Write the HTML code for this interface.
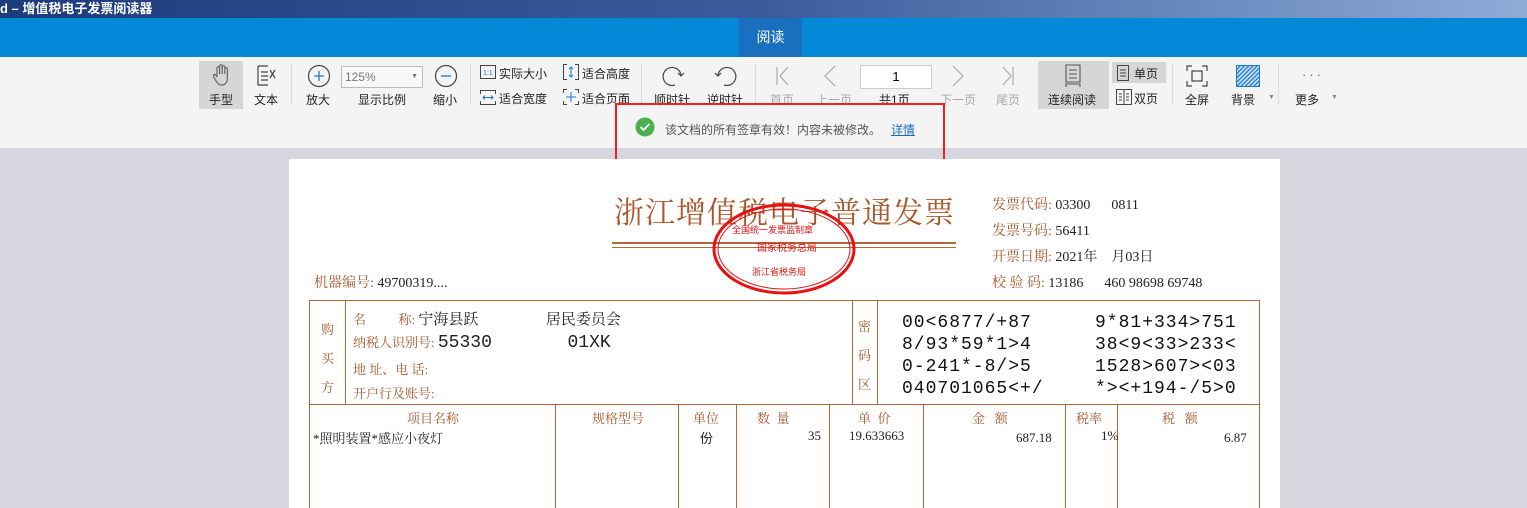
<!DOCTYPE html>
<html><head><meta charset="utf-8"><style>
*{margin:0;padding:0;box-sizing:border-box}
body{width:1527px;height:508px;overflow:hidden;font-family:"Liberation Sans","Noto Sans CJK SC",sans-serif;background:#d5d6de;position:relative}
.a{position:absolute;white-space:nowrap}
.tb{left:0;top:0;width:1527px;height:18px;background:linear-gradient(90deg,#1d3a7c,#3b5c9c 50%,#8eacd8);color:#fff;font-size:13px;font-weight:bold;line-height:18px}
.blue{left:0;top:18px;width:1527px;height:39px;background:#0489d9}
.tab{left:739px;top:18px;width:63px;height:39px;background:#1a6fbf;color:#fff;font-size:14px;line-height:39px;text-align:center}
.tool{left:0;top:57px;width:1527px;height:91px;background:#f4f4f4}
.lbl{font-size:12px;color:#222}
.dim{color:#aaa}
.ico{position:absolute}
.b{color:#a8582c;font-family:"Liberation Serif","Noto Serif CJK SC",serif}
.l{position:absolute;background:#b5653a}
.mono{font-family:"Liberation Mono","DejaVu Sans Mono",monospace;font-size:18px;letter-spacing:1px;color:#111;line-height:22px}
</style></head><body>
<div class="a tb">d – 增值税电子发票阅读器</div>
<div class="a blue"></div>
<div class="a tab">阅读</div>
<div class="a tool"></div>
<div class="a" style="left:199px;top:61px;width:44px;height:48px;background:#d6d6d6"></div>
<div class="a" style="left:1038px;top:61px;width:71px;height:48px;background:#d6d6d6"></div>
<div class="a" style="left:1112px;top:62px;width:54px;height:21px;background:#d6d6d6"></div>
<div class="a" style="left:291px;top:64px;width:1px;height:40px;background:#ddd"></div>
<div class="a" style="left:470px;top:64px;width:1px;height:40px;background:#ddd"></div>
<div class="a" style="left:641px;top:64px;width:1px;height:40px;background:#ddd"></div>
<div class="a" style="left:755px;top:64px;width:1px;height:40px;background:#ddd"></div>
<div class="a" style="left:1172px;top:64px;width:1px;height:40px;background:#ddd"></div>
<div class="a" style="left:1278px;top:64px;width:1px;height:40px;background:#ddd"></div>
<svg class="ico" style="left:210px;top:63px" width="24" height="24" viewBox="0 0 24 24" fill="none" stroke="#666" stroke-width="1.2"><path d="M7 13V5a1.3 1.3 0 0 1 2.6 0v6M9.6 11V3a1.3 1.3 0 0 1 2.6 0v8M12.2 11V4a1.3 1.3 0 0 1 2.6 0v7M14.8 11V6a1.3 1.3 0 0 1 2.6 0v9c0 4-2 7-6 7-3 0-4-2-6-5l-2-4a1.3 1.3 0 0 1 2.2-1.2L7 14"/></svg>
<svg class="ico" style="left:255px;top:64px" width="22" height="24" viewBox="0 0 22 24" fill="none" stroke="#444" stroke-width="1.2"><path d="M3 2h10M3 2v19h10M6 8h7M6 12h7M6 16h7M15 6l5 8M20 6l-5 8"/></svg>
<svg class="ico" style="left:307px;top:64px" width="24" height="24"><circle cx="12" cy="12" r="10.5" fill="none" stroke="#444" stroke-width="1.2"/><path d="M12 7v10M7 12h10" stroke="#1a7ad0" stroke-width="1.3"/></svg>
<div class="a" style="left:341px;top:66px;width:82px;height:22px;border:1px solid #bbb;background:#f8f8f8;font-size:12px;color:#777;line-height:20px;padding-left:3px">125%<span style="position:absolute;right:4px;font-size:7px">▼</span></div>
<svg class="ico" style="left:434px;top:64px" width="24" height="24"><circle cx="12" cy="12" r="10.5" fill="none" stroke="#444" stroke-width="1.2"/><path d="M7 12h10" stroke="#1a7ad0" stroke-width="1.3"/></svg>
<svg class="ico" style="left:480px;top:65px" width="16" height="14"><rect x=".5" y=".5" width="15" height="13" fill="none" stroke="#444"/><text x="3" y="10" font-size="7" fill="#1a7ad0">1:1</text></svg>
<svg class="ico" style="left:563px;top:64px" width="16" height="16"><path d="M4 .5H.5v15H4M12 .5h3.5v15H12" fill="none" stroke="#444"/><path d="M8 3v10M6 5l2-2 2 2M6 11l2 2 2-2" fill="none" stroke="#1a7ad0"/></svg>
<svg class="ico" style="left:480px;top:90px" width="16" height="15"><path d="M.5 4V.5h15V4M.5 11v3.5h15V11" fill="none" stroke="#444"/><path d="M3 7.5h10M5 5.5l-2 2 2 2M11 5.5l2 2-2 2" fill="none" stroke="#1a7ad0"/></svg>
<svg class="ico" style="left:563px;top:89px" width="16" height="16"><path d="M.5 4V.5H4M12 .5h3.5V4M.5 12v3.5H4M12 15.5h3.5V12" fill="none" stroke="#444"/><path d="M8 3v10M3 8h10" fill="none" stroke="#1a7ad0"/></svg>
<svg class="ico" style="left:660px;top:64px" width="26" height="24" fill="none" stroke="#444" stroke-width="1.2"><path d="M21 11A9 9 0 1 0 15 21"/><path d="M18 9l3 3 3-3"/></svg>
<svg class="ico" style="left:713px;top:64px" width="26" height="24" fill="none" stroke="#444" stroke-width="1.2"><path d="M5 11a9 9 0 1 1 6 10"/><path d="M2 9l3 3 3-3"/></svg>
<svg class="ico" style="left:775px;top:66px" width="16" height="20" fill="none" stroke="#aaa" stroke-width="1.2"><path d="M2 1v18M13 1L5 10l8 9"/></svg>
<svg class="ico" style="left:822px;top:65px" width="16" height="22" fill="none" stroke="#aaa" stroke-width="1.2"><path d="M13 1L3 11l10 10"/></svg>
<div class="a" style="left:860px;top:65px;width:72px;height:24px;border:1px solid #ccc;background:#fff;font-size:13px;text-align:center;line-height:22px">1</div>
<svg class="ico" style="left:950px;top:65px" width="16" height="22" fill="none" stroke="#aaa" stroke-width="1.2"><path d="M3 1l10 10L3 21"/></svg>
<svg class="ico" style="left:1000px;top:66px" width="16" height="20" fill="none" stroke="#aaa" stroke-width="1.2"><path d="M13 1v18M3 1l8 9-8 9"/></svg>
<svg class="ico" style="left:1064px;top:64px" width="18" height="24" fill="none" stroke="#555" stroke-width="1.1"><path d="M2 1h14v17H2zM5 6h8M5 10h8M5 14h8M2 23v-3h14v3"/></svg>
<svg class="ico" style="left:1116px;top:65px" width="14" height="16" fill="none" stroke="#444"><path d="M1.5.5h11v15h-11zM4 5h6M4 8h6M4 11h6"/></svg>
<svg class="ico" style="left:1116px;top:89px" width="16" height="16" fill="none" stroke="#444"><path d="M.5.5h15v15H.5zM8 .5v15M3 5h3M3 8h3M3 11h3M10 5h3M10 8h3M10 11h3"/></svg>
<svg class="ico" style="left:1186px;top:65px" width="22" height="22" fill="none" stroke="#444" stroke-width="1.2"><path d="M1 6V1h5M16 1h5v5M1 16v5h5M16 21h5v-5"/><rect x="6" y="6" width="10" height="10"/></svg>
<svg class="ico" style="left:1236px;top:65px" width="24" height="22"><defs><pattern id="h" width="3" height="3" patternUnits="userSpaceOnUse" patternTransform="rotate(45)"><rect width="1.3" height="3" fill="#1a7ad0"/></pattern></defs><rect x=".5" y=".5" width="23" height="21" fill="#cfe3f6" stroke="#1a7ad0"/><rect x=".5" y=".5" width="23" height="21" fill="url(#h)"/></svg>
<div class="a" style="left:1302px;top:67px;font-size:13px;color:#666;letter-spacing:3px">···</div>
<div class="a lbl" style="left:209px;top:91px">手型</div>
<div class="a lbl" style="left:254px;top:91px">文本</div>
<div class="a lbl" style="left:306px;top:91px">放大</div>
<div class="a lbl" style="left:358px;top:91px">显示比例</div>
<div class="a lbl" style="left:433px;top:91px">缩小</div>
<div class="a lbl" style="left:499px;top:65px">实际大小</div>
<div class="a lbl" style="left:582px;top:65px">适合高度</div>
<div class="a lbl" style="left:499px;top:90px">适合宽度</div>
<div class="a lbl" style="left:582px;top:90px">适合页面</div>
<div class="a lbl" style="left:654px;top:91px">顺时针</div>
<div class="a lbl" style="left:707px;top:91px">逆时针</div>
<div class="a lbl dim" style="left:770px;top:91px">首页</div>
<div class="a lbl dim" style="left:816px;top:91px">上一页</div>
<div class="a lbl" style="left:879px;top:91px">共1页</div>
<div class="a lbl dim" style="left:940px;top:91px">下一页</div>
<div class="a lbl dim" style="left:996px;top:91px">尾页</div>
<div class="a lbl" style="left:1048px;top:91px">连续阅读</div>
<div class="a lbl" style="left:1134px;top:65px">单页</div>
<div class="a lbl" style="left:1134px;top:90px">双页</div>
<div class="a lbl" style="left:1185px;top:91px">全屏</div>
<div class="a lbl" style="left:1231px;top:91px">背景</div>
<div class="a" style="left:1268px;top:94px;font-size:7px;color:#888">▼</div>
<div class="a lbl" style="left:1295px;top:91px">更多</div>
<div class="a" style="left:1331px;top:94px;font-size:7px;color:#888">▼</div>
<svg class="ico" style="left:635px;top:117px" width="20" height="20"><circle cx="10" cy="10" r="9.5" fill="#4caf50"/><path d="M5.5 10l3 3 6-6" fill="none" stroke="#fff" stroke-width="1.8"/></svg>
<div class="a" style="left:665px;top:121px;font-size:12px;color:#555">该文档的所有签章有效！内容未被修改。</div>
<div class="a" style="left:891px;top:121px;font-size:12px;color:#1a6fc0;text-decoration:underline">详情</div>
<div class="a" style="left:615px;top:103px;width:330px;height:62px;border:2px solid #ef2020"></div>
<div class="a" style="left:289px;top:159px;width:991px;height:349px;background:#fff"></div>
<div class="a b" style="left:614px;top:188px;font-size:30px;letter-spacing:1px;color:#a8582c">浙江增值税电子普通发票</div>
<div class="l" style="left:612px;top:242px;width:344px;height:2px"></div>
<div class="l" style="left:612px;top:247px;width:344px;height:1px"></div>
<svg class="ico" style="left:712px;top:203px" width="144" height="92"><ellipse cx="72" cy="46" rx="70" ry="44" fill="none" stroke="#e81010" stroke-width="3"/><ellipse cx="72" cy="46" rx="66" ry="40" fill="none" stroke="#e81010" stroke-width="1"/><text x="45" y="48" font-size="10" fill="#e81010">国家税务总局</text><text x="40" y="72" font-size="9" fill="#e81010">浙江省税务局</text><text x="20" y="30" font-size="9" fill="#e81010">全国统一发票监制章</text></svg>
<div class="a b" style="left:992px;top:194px;font-size:14px">发票代码: <span style="color:#222">03300&nbsp;&nbsp;&nbsp;&nbsp;&nbsp;&nbsp;0811</span></div>
<div class="a b" style="left:992px;top:220px;font-size:14px">发票号码: <span style="color:#222">56411</span></div>
<div class="a b" style="left:992px;top:246px;font-size:14px">开票日期: <span style="color:#222">2021年&nbsp;&nbsp;&nbsp;&nbsp;月03日</span></div>
<div class="a b" style="left:992px;top:272px;font-size:14px">校 验 码: <span style="color:#222">13186&nbsp;&nbsp;&nbsp;&nbsp;&nbsp;&nbsp;460 98698 69748</span></div>
<div class="a b" style="left:314px;top:272px;font-size:14px">机器编号: <span style="color:#222">49700319....</span></div>
<div class="l" style="left:309px;top:300px;width:951px;height:1px"></div>
<div class="l" style="left:309px;top:404px;width:951px;height:1px"></div>
<div class="l" style="left:309px;top:300px;width:1px;height:208px"></div>
<div class="l" style="left:1259px;top:300px;width:1px;height:208px"></div>
<div class="l" style="left:345px;top:300px;width:1px;height:104px"></div>
<div class="l" style="left:852px;top:300px;width:1px;height:104px"></div>
<div class="l" style="left:877px;top:300px;width:1px;height:104px"></div>
<div class="l" style="left:555px;top:404px;width:1px;height:104px"></div>
<div class="l" style="left:678px;top:404px;width:1px;height:104px"></div>
<div class="l" style="left:736px;top:404px;width:1px;height:104px"></div>
<div class="l" style="left:829px;top:404px;width:1px;height:104px"></div>
<div class="l" style="left:923px;top:404px;width:1px;height:104px"></div>
<div class="l" style="left:1065px;top:404px;width:1px;height:104px"></div>
<div class="l" style="left:1117px;top:404px;width:1px;height:104px"></div>
<div class="a b" style="left:321px;top:315px;font-size:13px;line-height:29px;white-space:normal;width:14px">购买方</div>
<div class="a b" style="left:858px;top:312px;font-size:13px;line-height:29px;white-space:normal;width:14px">密码区</div>
<div class="a b" style="left:353px;top:308px;font-size:13px">名&nbsp;&nbsp;&nbsp;&nbsp;&nbsp;&nbsp;&nbsp;&nbsp;&nbsp;&nbsp;称: <span style="color:#222;font-size:15px">宁海县跃&nbsp;&nbsp;&nbsp;&nbsp;&nbsp;&nbsp;&nbsp;&nbsp;&nbsp;&nbsp;&nbsp;&nbsp;&nbsp;&nbsp;&nbsp;&nbsp;&nbsp;&nbsp;居民委员会</span></div>
<div class="a b" style="left:353px;top:332px;font-size:13px">纳税人识别号: <span style="color:#222;font-size:18px;font-family:'Liberation Mono',monospace">55330&nbsp;&nbsp;&nbsp;&nbsp;&nbsp;&nbsp;&nbsp;01XK</span></div>
<div class="a b" style="left:353px;top:359px;font-size:13px">地 址、电 话:</div>
<div class="a b" style="left:353px;top:383px;font-size:13px">开户行及账号:</div>
<div class="a mono" style="left:902px;top:312px">00&lt;6877/+87<br>8/93*59*1&gt;4<br>0-241*-8/&gt;5<br>040701065&lt;+/</div>
<div class="a mono" style="left:1095px;top:312px">9*81+334&gt;751<br>38&lt;9&lt;33&gt;233&lt;<br>1528&gt;607&gt;&lt;03<br>*&gt;&lt;+194-/5&gt;0</div>
<div class="a b" style="left:407px;top:408px;font-size:13px">项目名称</div>
<div class="a b" style="left:592px;top:408px;font-size:13px">规格型号</div>
<div class="a b" style="left:693px;top:408px;font-size:13px">单位</div>
<div class="a b" style="left:757px;top:408px;font-size:13px">数&nbsp;&nbsp;量</div>
<div class="a b" style="left:858px;top:408px;font-size:13px">单&nbsp;&nbsp;价</div>
<div class="a b" style="left:972px;top:408px;font-size:13px">金&nbsp;&nbsp;&nbsp;额</div>
<div class="a b" style="left:1076px;top:408px;font-size:13px">税率</div>
<div class="a b" style="left:1162px;top:408px;font-size:13px">税&nbsp;&nbsp;&nbsp;额</div>
<div class="a" style="left:313px;top:428px;font-size:13px;color:#222;font-family:'Liberation Serif','Noto Serif CJK SC',serif">*照明装置*感应小夜灯</div>
<div class="a" style="left:700px;top:428px;font-size:13px;color:#222">份</div>
<div class="a" style="left:808px;top:428px;font-size:13px;color:#222;font-family:'Liberation Serif',serif">35</div>
<div class="a" style="left:849px;top:428px;font-size:13px;color:#222;font-family:'Liberation Serif',serif">19.633663</div>
<div class="a" style="left:1016px;top:430px;font-size:13px;color:#222;font-family:'Liberation Serif',serif">687.18</div>
<div class="a" style="left:1101px;top:428px;font-size:13px;color:#222;font-family:'Liberation Serif',serif">1%</div>
<div class="a" style="left:1224px;top:430px;font-size:13px;color:#222;font-family:'Liberation Serif',serif">6.87</div>
</body></html>
